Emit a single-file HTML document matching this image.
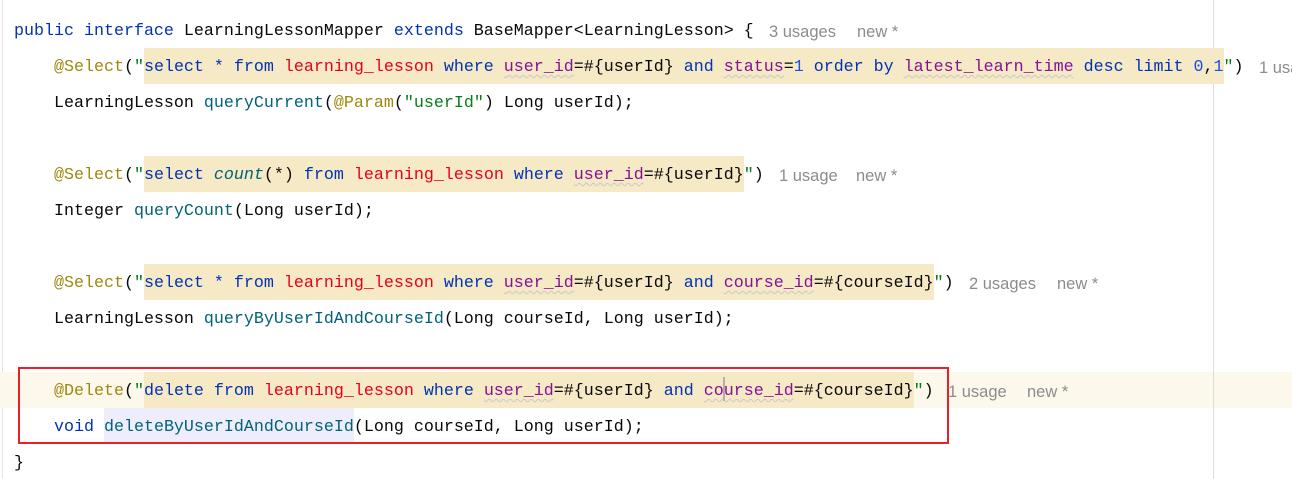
<!DOCTYPE html>
<html><head><meta charset="utf-8"><style>
html,body{margin:0;padding:0;background:#fff;width:1292px;height:479px;overflow:hidden;position:relative}
.gut{position:absolute;left:2px;top:0;width:1px;height:479px;background:#e4e4e4}
.guide{position:absolute;left:1213px;top:0;width:1px;height:479px;background:#dcdcdc}
.ln{position:absolute;left:14px;height:36px;line-height:36px;white-space:pre;font-family:"Liberation Mono",monospace;font-size:16.67px;color:#080808}
.cur{position:absolute;left:0;width:1292px;height:36px;background:#fcf9ec}
.k{color:#0033b3}.a{color:#9e880d}.s{color:#067d17}.t{color:#e8001a}.c{color:#871094}.m{color:#00627a}.n{color:#1750eb}
.sq{background:#f5e9c6;display:inline-block;height:36px;vertical-align:top}
.in{position:relative;top:2px}
.sq .c{text-decoration:underline wavy #c8c8c8 1px;text-underline-offset:3px}
.mh{background:#ededfc;display:inline-block;height:36px;vertical-align:top}
.h{font-family:"Liberation Sans",sans-serif;font-size:16.5px;color:#8c8c8c;position:absolute;line-height:36px;white-space:pre;margin-top:2px}
.box{position:absolute;left:18px;top:367px;width:927px;height:73px;border:2px solid #e8202a}
.caret{position:absolute;left:723px;top:377px;width:2px;height:24px;background:#b0b0b0}
</style></head><body>
<div class="gut"></div>
<div class="cur" style="top:372px"></div>
<div class="guide"></div>

<div class="ln" style="top:14px"><span class="k">public interface</span> LearningLessonMapper <span class="k">extends</span> BaseMapper&lt;LearningLesson&gt; {</div>
<div class="h" style="top:12px;left:769px">3 usages</div><div class="h" style="top:12px;left:857px">new *</div>

<div class="ln" style="top:48px">    <span class="in"><span class="a">@Select</span>(<span class="s">"</span></span><span class="sq"><span class="in"><span class="k">select * from </span><span class="t">learning_lesson</span><span class="k"> where </span><span class="c">user_id</span>=#{userId}<span class="k"> and </span><span class="c">status</span>=<span class="n">1</span><span class="k"> order by </span><span class="c">latest_learn_time</span><span class="k"> desc limit </span><span class="n">0</span>,<span class="n">1</span></span></span><span class="in"><span class="s">"</span>)</span></div>
<div class="h" style="top:48px;left:1259px">1 usa</div>

<div class="ln" style="top:86px">    LearningLesson <span class="m">queryCurrent</span>(<span class="a">@Param</span>(<span class="s">"userId"</span>) Long userId);</div>

<div class="ln" style="top:156px">    <span class="in"><span class="a">@Select</span>(<span class="s">"</span></span><span class="sq"><span class="in"><span class="k">select </span><span class="m" style="font-style:italic">count</span>(*)<span class="k"> from </span><span class="t">learning_lesson</span><span class="k"> where </span><span class="c">user_id</span>=#{userId}</span></span><span class="in"><span class="s">"</span>)</span></div>
<div class="h" style="top:156px;left:779px">1 usage</div><div class="h" style="top:156px;left:856px">new *</div>

<div class="ln" style="top:194px">    Integer <span class="m">queryCount</span>(Long userId);</div>

<div class="ln" style="top:264px">    <span class="in"><span class="a">@Select</span>(<span class="s">"</span></span><span class="sq"><span class="in"><span class="k">select * from </span><span class="t">learning_lesson</span><span class="k"> where </span><span class="c">user_id</span>=#{userId}<span class="k"> and </span><span class="c">course_id</span>=#{courseId}</span></span><span class="in"><span class="s">"</span>)</span></div>
<div class="h" style="top:264px;left:969px">2 usages</div><div class="h" style="top:264px;left:1057px">new *</div>

<div class="ln" style="top:302px">    LearningLesson <span class="m">queryByUserIdAndCourseId</span>(Long courseId, Long userId);</div>

<div class="ln" style="top:372px">    <span class="in"><span class="a">@Delete</span>(<span class="s">"</span></span><span class="sq"><span class="in"><span class="k">delete from </span><span class="t">learning_lesson</span><span class="k"> where </span><span class="c">user_id</span>=#{userId}<span class="k"> and </span><span class="c">course_id</span>=#{courseId}</span></span><span class="in"><span class="s">"</span>)</span></div>
<div class="h" style="top:372px;left:948px">1 usage</div><div class="h" style="top:372px;left:1027px">new *</div>
<div class="caret"></div>

<div class="ln" style="top:408px">    <span class="in"><span class="k">void</span> </span><span class="mh"><span class="in"><span class="m">deleteByUserIdAndCourseId</span></span></span><span class="in">(Long courseId, Long userId);</span></div>

<div class="ln" style="top:446px">}</div>
<div class="box"></div>
</body></html>
